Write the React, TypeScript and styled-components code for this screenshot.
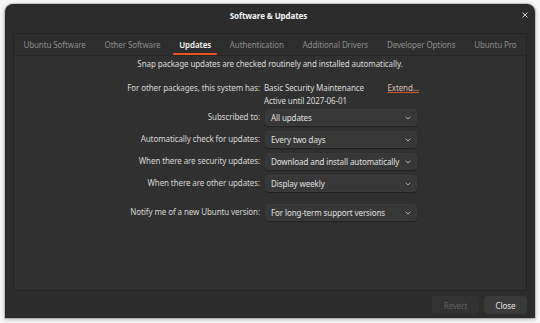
import React from 'react';
import styled, { createGlobalStyle } from 'styled-components';

const Global = createGlobalStyle`
  html, body { margin: 0; padding: 0; background: #f6f6f6; }
  body { font-family: "Noto Sans", "DejaVu Sans", sans-serif; }
  * { box-sizing: border-box; }
`;

const Page = styled.div`
  width: 540px;
  height: 323px;
  padding: 4px 5px 0;
`;

const Window = styled.div`
  width: 530px;
  height: 314px;
  background: #2c2c2c;
  border-radius: 8px 8px 0 0;
  box-shadow: 0 0 0 1px rgba(0, 0, 0, 0.12), 0 1px 4px rgba(0, 0, 0, 0.3);
  display: flex;
  flex-direction: column;
  color: #dcdcdc;
  font-size: 8px;
  letter-spacing: -0.1px;
  overflow: hidden;
`;

const HeaderBar = styled.div`
  height: 22px;
  display: grid;
  grid-template-columns: 1fr auto 1fr;
  align-items: center;
  padding: 0 3px 0 0;
`;

const Title = styled.div`
  grid-column: 2;
  font-weight: 700;
  color: #f2f2f2;
`;

const CloseX = styled.div`
  grid-column: 3;
  justify-self: end;
  width: 14px;
  height: 14px;
  display: flex;
  align-items: center;
  justify-content: center;
`;

const Body = styled.div`
  flex: 1;
  display: flex;
  flex-direction: column;
  padding: 7px 8px 0;
`;

const Notebook = styled.div`
  height: 258px;
  border: 1px solid #232323;
  background: #303030;
  display: flex;
  flex-direction: column;
`;

const TabBar = styled.div`
  height: 22px;
  display: flex;
  border-bottom: 1px solid #262626;
  background: #2d2d2d;
`;

const Tab = styled.div<{ $active?: boolean }>`
  flex: 1 1 auto;
  min-width: 0;
  position: relative;
  display: flex;
  align-items: center;
  justify-content: center;
  padding: 0 6px;
  white-space: nowrap;
  color: ${(p) => (p.$active ? '#f4f4f4' : '#8c8c8c')};
  font-weight: ${(p) => (p.$active ? 600 : 400)};
`;

const TabLine = styled.div`
  position: absolute;
  left: 3px;
  right: 3px;
  bottom: 0;
  height: 2px;
  background: #e95420;
  border-radius: 1px;
`;

const Content = styled.div`
  flex: 1;
  display: flex;
  flex-direction: column;
  padding-top: 1px;
`;

const Note = styled.div`
  text-align: center;
  line-height: 13px;
  color: #dcdcdc;
`;

const Form = styled.div`
  display: flex;
  flex-direction: column;
  margin-left: 112px;
`;

const Row = styled.div<{ $top: number; $alignTop?: boolean }>`
  display: flex;
  align-items: ${(p) => (p.$alignTop ? 'flex-start' : 'center')};
  gap: 5px;
  margin-top: ${(p) => p.$top}px;
`;

const Label = styled.div`
  width: 134px;
  text-align: right;
  white-space: nowrap;
  line-height: 12.6px;
  color: #d6d6d6;
`;

const ValueStack = styled.div`
  width: 155px;
  margin-left: -1px;
  display: flex;
  flex-direction: column;
  line-height: 12.6px;
`;

const ValueLine = styled.div`
  display: flex;
  justify-content: space-between;
  white-space: nowrap;
`;

const Link = styled.span`
  color: #dcbcb2;
  text-decoration: underline;
  text-decoration-color: #d9572e;
  text-underline-offset: 1px;
`;

const Combo = styled.div`
  width: 152px;
  height: 17px;
  border-radius: 4px;
  background: #373737;
  box-shadow: 0 1px 1px rgba(0, 0, 0, 0.35), inset 0 0 0 1px rgba(255, 255, 255, 0.025);
  display: flex;
  align-items: center;
  justify-content: space-between;
  padding: 0 6px;
  white-space: nowrap;
  color: #e0e0e0;
`;

const Chevron = () => (
  <svg width="6" height="4" viewBox="0 0 6 4" fill="none">
    <path d="M0.6 0.7 L3 3 L5.4 0.7" stroke="#bdbdbd" strokeWidth="0.9" />
  </svg>
);

const ButtonBar = styled.div`
  flex: 1;
  display: flex;
  justify-content: flex-end;
  align-items: center;
  gap: 5px;
  padding: 1px 0 0 0;
`;

const Button = styled.div<{ $disabled?: boolean; $w: number }>`
  width: ${(p) => p.$w}px;
  height: 18px;
  border-radius: 4px;
  display: flex;
  align-items: center;
  justify-content: center;
  background: ${(p) => (p.$disabled ? '#323232' : '#3a3a3a')};
  color: ${(p) => (p.$disabled ? '#626262' : '#e2e2e2')};
`;

const tabs = [
  'Ubuntu Software',
  'Other Software',
  'Updates',
  'Authentication',
  'Additional Drivers',
  'Developer Options',
  'Ubuntu Pro',
];

const combos: { label: string; value: string; top: number }[] = [
  { label: 'Subscribed to:', value: 'All updates', top: 2 },
  { label: 'Automatically check for updates:', value: 'Every two days', top: 5 },
  { label: 'When there are security updates:', value: 'Download and install automatically', top: 5 },
  { label: 'When there are other updates:', value: 'Display weekly', top: 5 },
  { label: 'Notify me of a new Ubuntu version:', value: 'For long-term support versions', top: 12 },
];

export default function App() {
  return (
    <>
      <Global />
      <Page>
        <Window>
          <HeaderBar>
            <Title>Software &amp; Updates</Title>
            <CloseX>
              <svg width="6" height="6" viewBox="0 0 6 6">
                <path d="M0.5 0.5 L5.5 5.5 M5.5 0.5 L0.5 5.5" stroke="#d0d0d0" strokeWidth="1" />
              </svg>
            </CloseX>
          </HeaderBar>
          <Body>
            <Notebook>
              <TabBar>
                {tabs.map((t) => (
                  <Tab key={t} $active={t === 'Updates'}>
                    {t}
                    {t === 'Updates' && <TabLine />}
                  </Tab>
                ))}
              </TabBar>
              <Content>
                <Note>Snap package updates are checked routinely and installed automatically.</Note>
                <Form>
                  <Row $top={12} $alignTop>
                    <Label>For other packages, this system has:</Label>
                    <ValueStack>
                      <ValueLine>
                        <span>Basic Security Maintenance</span>
                        <Link>Extend…</Link>
                      </ValueLine>
                      <ValueLine>Active until 2027-06-01</ValueLine>
                    </ValueStack>
                  </Row>
                  {combos.map((c) => (
                    <Row key={c.label} $top={c.top}>
                      <Label>{c.label}</Label>
                      <Combo>
                        <span>{c.value}</span>
                        <Chevron />
                      </Combo>
                    </Row>
                  ))}
                </Form>
              </Content>
            </Notebook>
            <ButtonBar>
              <Button $disabled $w={47}>Revert</Button>
              <Button $w={43}>Close</Button>
            </ButtonBar>
          </Body>
        </Window>
      </Page>
    </>
  );
}
